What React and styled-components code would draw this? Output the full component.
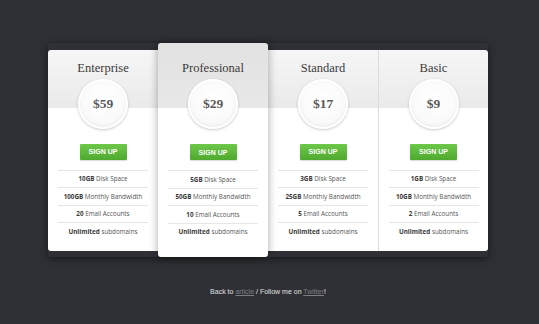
import React from "react"
import styled, { createGlobalStyle } from "styled-components"

const Global = createGlobalStyle`
  html, body { margin: 0; padding: 0; }
  body {
    background: #2e3035;
    font-family: "Open Sans", "Liberation Sans", sans-serif;
  }
`

const Page = styled.div`
  width: 539px;
  height: 324px;
  padding: 43px 3px 0 0;
  box-sizing: border-box;
  display: flex;
  flex-direction: column;
  align-items: center;
`

const Table = styled.div`
  display: flex;
  align-items: center;
  box-shadow: 0 2px 8px rgba(0,0,0,0.5);
  border-radius: 3px;
`

const Card = styled.div`
  width: 110px;
  box-sizing: border-box;
  display: flex;
  flex-direction: column;
  align-items: center;
  padding: ${p => (p.featured ? "17px 10px 17px" : "10px 10px 11px")};
  background: ${p =>
    p.featured
      ? "linear-gradient(to bottom, #e2e2e2 0, #e8e8e8 65px, #fff 65px)"
      : "linear-gradient(to bottom, #f6f6f6 0, #eaeaea 58px, #fff 58px)"};
  border-left: ${p => (p.divider ? "1px solid #dcdcdc" : "none")};
  border-radius: ${p => (p.featured ? "3px" : p.first ? "3px 0 0 3px" : p.last ? "0 3px 3px 0" : "0")};
  box-shadow: ${p => (p.featured ? "0 0 8px rgba(0,0,0,0.35)" : "none")};
  position: ${p => (p.featured ? "relative" : "static")};
  z-index: ${p => (p.featured ? 1 : 0)};
`

const Title = styled.h2`
  margin: 0;
  font-family: "Liberation Serif", "DejaVu Serif", serif;
  font-weight: normal;
  font-size: 12.5px;
  line-height: 16px;
  color: #3a3a3a;
`

const Circle = styled.div`
  width: 50px;
  height: 50px;
  margin-top: 3px;
  border-radius: 50%;
  background: radial-gradient(circle at 50% 40%, #ffffff 0, #fafafa 60%, #ececec 100%);
  box-shadow: 0 1px 3px rgba(0,0,0,0.22), inset 0 0 0 2px #fff, inset 0 -1px 5px rgba(0,0,0,0.1);
  display: flex;
  align-items: center;
  justify-content: center;
  font-family: "Liberation Serif", "DejaVu Serif", serif;
  font-weight: bold;
  font-size: 13.5px;
  color: #5a5a5a;
`

const Button = styled.a`
  margin-top: 15px;
  width: 47px;
  height: 16px;
  border-radius: 1px;
  background: linear-gradient(to bottom, #6dc84a, #4ea92f);
  box-shadow: 0 1px 1px rgba(0,0,0,0.15);
  color: #fff;
  font-family: "Liberation Sans", sans-serif;
  font-weight: bold;
  font-size: 7px;
  display: flex;
  align-items: center;
  justify-content: center;
  text-decoration: none;
`

const Features = styled.ul`
  list-style: none;
  margin: 10px 0 0;
  padding: 0;
  width: 90px;
`

const Feature = styled.li`
  height: 17.5px;
  box-sizing: border-box;
  border-top: 1px solid #e6e6e6;
  display: flex;
  align-items: center;
  justify-content: center;
  font-size: 6.3px;
  color: #555;
  white-space: nowrap;
  b { color: #3a3a3a; font-weight: 700; }
`

const Footer = styled.p`
  margin: 31px 0 0;
  font-family: "Liberation Sans", sans-serif;
  font-size: 7px;
  line-height: 8px;
  color: #e2e2e2;
  a { color: #7c7e82; text-decoration: underline; }
`

const plans = [
  { name: "Enterprise", price: "$59", disk: "10GB", bw: "100GB", mail: "20" },
  { name: "Professional", price: "$29", disk: "5GB", bw: "50GB", mail: "10", featured: true },
  { name: "Standard", price: "$17", disk: "3GB", bw: "25GB", mail: "5" },
  { name: "Basic", price: "$9", disk: "1GB", bw: "10GB", mail: "2", divider: true },
]

const App = () => (
  <>
    <Global />
    <Page>
      <Table>
        {plans.map((p, i) => (
          <Card key={p.name} featured={p.featured} divider={p.divider} first={i === 0} last={i === plans.length - 1}>
            <Title>{p.name}</Title>
            <Circle>{p.price}</Circle>
            <Button href="#">SIGN UP</Button>
            <Features>
              <Feature><b>{p.disk}</b>&nbsp;Disk Space</Feature>
              <Feature><b>{p.bw}</b>&nbsp;Monthly Bandwidth</Feature>
              <Feature><b>{p.mail}</b>&nbsp;Email Accounts</Feature>
              <Feature><b>Unlimited</b>&nbsp;subdomains</Feature>
            </Features>
          </Card>
        ))}
      </Table>
      <Footer>Back to <a href="#">article</a> / Follow me on <a href="#">Twitter</a>!</Footer>
    </Page>
  </>
)

export default App
